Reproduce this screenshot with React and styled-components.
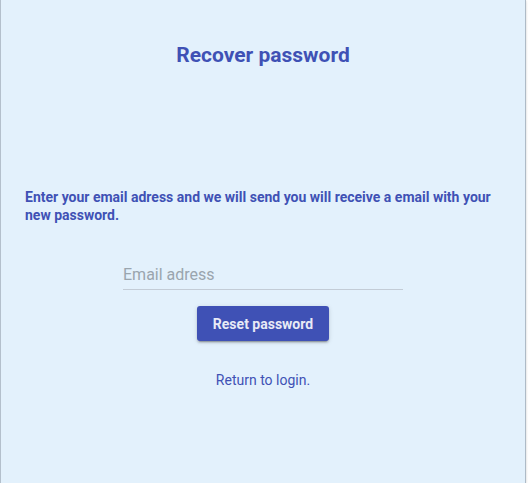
import styled, { createGlobalStyle } from "styled-components";

const GlobalStyle = createGlobalStyle`
  html, body {
    margin: 0;
    padding: 0;
    background: #ffffff;
    font-family: Roboto, "Liberation Sans", sans-serif;
  }
`;

const RecoverPassword = () => {
  return (
    <Card>
      <Title>Recover password</Title>
      <Info>
        Enter your email adress and we will send you will receive a email with your new password.
      </Info>
      <Form>
        <EmailInput type="email" placeholder="Email adress" />
        <ResetButton type="button">Reset password</ResetButton>
        <BackLink href="#">Return to login.</BackLink>
      </Form>
    </Card>
  );
};

export default function App() {
  return (
    <>
      <GlobalStyle />
      <RecoverPassword />
    </>
  );
}

const Card = styled.div`
  width: 526px;
  height: 483px;
  box-sizing: border-box;
  background-color: #e3f1fc;
  box-shadow: 0 2px 1px -1px rgba(0, 0, 0, 0.2), 0 1px 1px 0 rgba(0, 0, 0, 0.14),
    0 1px 3px 0 rgba(0, 0, 0, 0.12);
  border-left: 1px solid #b4c0cc;
  border-right: 1px solid #aebbc7;
  padding: 41px 24px 0 24px;
  display: flex;
  flex-direction: column;
  color: #3f51b5;
`;

const Title = styled.h1`
  margin: 0;
  text-align: center;
  font-size: 21px;
  font-weight: 700;
  line-height: 28px;
`;

const Info = styled.p`
  margin: 119px 0 0 0;
  font-size: 14px;
  font-weight: 700;
  line-height: 18px;
`;

const Form = styled.div`
  display: flex;
  flex-direction: column;
  align-items: center;
  margin-top: 35px;
`;

const EmailInput = styled.input`
  width: 280px;
  box-sizing: border-box;
  border: none;
  border-bottom: 1px solid #c3ccd6;
  background: transparent;
  font-family: inherit;
  font-size: 16px;
  padding: 6px 0 5px 0;
  color: #333;
  outline: none;

  &::placeholder {
    color: #9aa5ae;
  }
`;

const ResetButton = styled.button`
  margin-top: 16px;
  width: 132px;
  height: 35px;
  border: none;
  border-radius: 3px;
  background-color: #3f51b5;
  color: #e8eaf6;
  font-family: inherit;
  font-size: 14px;
  font-weight: 700;
  box-shadow: 0 3px 1px -2px rgba(0, 0, 0, 0.2), 0 2px 2px 0 rgba(0, 0, 0, 0.14),
    0 1px 5px 0 rgba(0, 0, 0, 0.12);
  cursor: pointer;
`;

const BackLink = styled.a`
  margin-top: 31px;
  font-size: 14px;
  color: #3f51b5;
  text-decoration: none;
`;
